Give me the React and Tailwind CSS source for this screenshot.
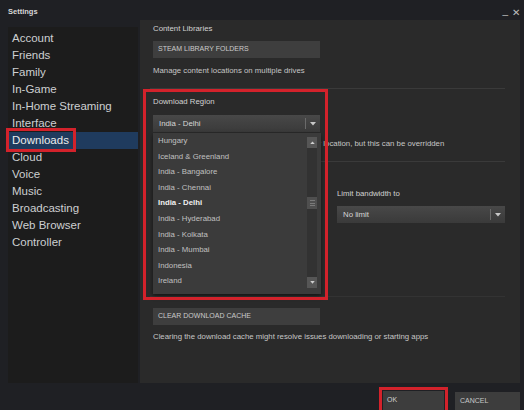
import React from "react";

const navItems = [
  "Account",
  "Friends",
  "Family",
  "In-Game",
  "In-Home Streaming",
  "Interface",
  "Downloads",
  "Cloud",
  "Voice",
  "Music",
  "Broadcasting",
  "Web Browser",
  "Controller",
];

const regions = [
  "Hungary",
  "Iceland & Greenland",
  "India - Bangalore",
  "India - Chennai",
  "India - Delhi",
  "India - Hyderabad",
  "India - Kolkata",
  "India - Mumbai",
  "Indonesia",
  "Ireland",
];

function Caret() {
  return (
    <svg width="6" height="4" viewBox="0 0 6 4">
      <path d="M0 0 L6 0 L3 3.5 Z" fill="#c8c8c8" />
    </svg>
  );
}

function Select({ value, className = "" }) {
  return (
    <div
      className={`flex h-[17px] items-center bg-gradient-to-b from-[#484848] to-[#3a3a3a] ${className}`}
    >
      <span className="flex-1 pl-[6px] text-[7.8px] text-[#d6d6d6]">{value}</span>
      <div className="h-[11px] w-px bg-[#6a6a6a]" />
      <div className="flex w-[14px] justify-center">
        <Caret />
      </div>
    </div>
  );
}

function Button({ children, className = "" }) {
  return (
    <div
      className={`flex h-[17px] items-center bg-[#3e3e3e] pl-[5px] text-[7px] uppercase text-[#cacaca] ${className}`}
    >
      {children}
    </div>
  );
}

export default function App() {
  return (
    <div
      className="flex h-[410px] w-[524px] flex-col overflow-hidden bg-[#1f2024] text-[#c6c6c6]"
      style={{ fontFamily: '"Liberation Sans", Arial, sans-serif' }}
    >
      {/* Title bar */}
      <div className="flex h-[20px] shrink-0 items-end justify-between pl-[8px] pr-[4px]">
        <span className="pb-[3px] text-[7.5px] font-bold text-[#d8d8d8]">Settings</span>
        <div className="flex items-center gap-[4px] pb-[2px] text-[10px] leading-none text-[#bdbdbd]">
          <span className="-mt-[4px]">_</span>
          <span>✕</span>
        </div>
      </div>

      <div className="flex flex-1">
        {/* Left nav */}
        <div className="ml-[8px] mt-[7px] w-[130px] bg-[#1c1c1c] pt-[3px]">
          {navItems.map((item) => (
            <div
              key={item}
              className={`relative flex h-[17px] items-center pl-[4px] text-[11.5px] ${
                item === "Downloads" ? "bg-[#1f3b5e] text-[#ececec]" : "text-[#cdcfd1]"
              }`}
            >
              {item}
              {item === "Downloads" && (
                <div className="pointer-events-none absolute -left-[2px] -top-[4px] h-[24px] w-[70px] border-[3px] border-[#d3222b]" />
              )}
            </div>
          ))}
        </div>

        {/* Main panel */}
        <div className="relative ml-[2px] mr-[4px] flex-1 bg-[#2a2a2a] pl-[13px] pr-[15px] pt-[4px]">
          <div className="flex h-[10px] items-center text-[7.8px] text-[#d2d2d2]">Content Libraries</div>
          <Button className="mt-[7px] w-[167px]">Steam Library Folders</Button>
          <div className="mt-[8px] flex h-[10px] items-center text-[7.8px]">
            Manage content locations on multiple drives
          </div>
          <div className="-ml-[3px] mt-[12px] h-px bg-[#3a3a3a]" />

          <div className="mt-[8px] flex h-[10px] items-center text-[7.8px] text-[#d2d2d2]">Download Region</div>
          <Select value="India - Delhi" className="mt-[8px] w-[167px]" />
          <div className="mt-[7px] flex h-[10px] items-center text-[7.8px]">
            Steam auto-detects the nearest download server location, but this can be overridden
          </div>
          <div className="ml-[167px] mt-[12px] h-px bg-[#3a3a3a]" />

          <div className="flex justify-end">
            <div className="w-[168px]">
              <div className="mt-[27px] flex h-[10px] items-center text-[7.8px] text-[#d2d2d2]">
                Limit bandwidth to
              </div>
              <Select value="No limit" className="mt-[7px]" />
            </div>
          </div>

          <div className="-ml-[3px] mt-[73px] h-px bg-[#333333]" />
          <Button className="mt-[11px] w-[167px]">Clear Download Cache</Button>
          <div className="mt-[7px] flex h-[10px] items-center text-[7.8px]">
            Clearing the download cache might resolve issues downloading or starting apps
          </div>

          {/* Open region list */}
          <div className="absolute left-[13px] top-[113px] flex h-[161px] w-[168px] bg-[#3b3b3b] shadow-[0_2px_4px_rgba(0,0,0,0.5)]">
            <div className="flex-1">
              {regions.map((r) => (
                <div
                  key={r}
                  className={`flex h-[15.6px] items-center pl-[5px] text-[7.8px] ${
                    r === "India - Delhi" ? "font-bold text-[#f0f0f0]" : "text-[#c0c0c0]"
                  }`}
                >
                  {r}
                </div>
              ))}
            </div>
            <div className="mb-[6px] mr-[4px] mt-[4px] flex w-[10px] flex-col bg-[#323232]">
              <div className="flex h-[11px] items-center justify-center bg-[#565656]">
                <svg width="5" height="3" viewBox="0 0 6 4">
                  <path d="M0 4 L6 4 L3 0.5 Z" fill="#cfcfcf" />
                </svg>
              </div>
              <div className="mt-[49px] flex h-[12px] flex-col items-center justify-center gap-[1.5px] bg-[#4f4f4f]">
                <div className="h-px w-[5px] bg-[#7a7a7a]" />
                <div className="h-px w-[5px] bg-[#7a7a7a]" />
                <div className="h-px w-[5px] bg-[#7a7a7a]" />
              </div>
              <div className="flex-1" />
              <div className="flex h-[11px] items-center justify-center bg-[#565656]">
                <svg width="5" height="3" viewBox="0 0 6 4">
                  <path d="M0 0 L6 0 L3 3.5 Z" fill="#cfcfcf" />
                </svg>
              </div>
            </div>
          </div>

          {/* Highlight box */}
          <div className="pointer-events-none absolute left-[3px] top-[69px] h-[211px] w-[185px] border-[3px] border-[#d3222b]" />
        </div>
      </div>

      {/* Footer */}
      <div className="flex h-[27px] shrink-0 items-end justify-end gap-[7px] pr-[4px]">
        <div className="mb-0 border-[3px] border-b-0 border-[#d3222b] px-[1px] pt-[1px]">
          <div className="flex h-[19px] w-[61px] items-center bg-[#3d3d3d] pl-[4px] text-[7px] text-[#d0d0d0]">OK</div>
        </div>
        <div className="flex h-[18px] w-[65px] items-center bg-[#3d3d3d] pl-[5px] text-[7px] text-[#c8c8c8]">
          CANCEL
        </div>
      </div>
    </div>
  );
}
